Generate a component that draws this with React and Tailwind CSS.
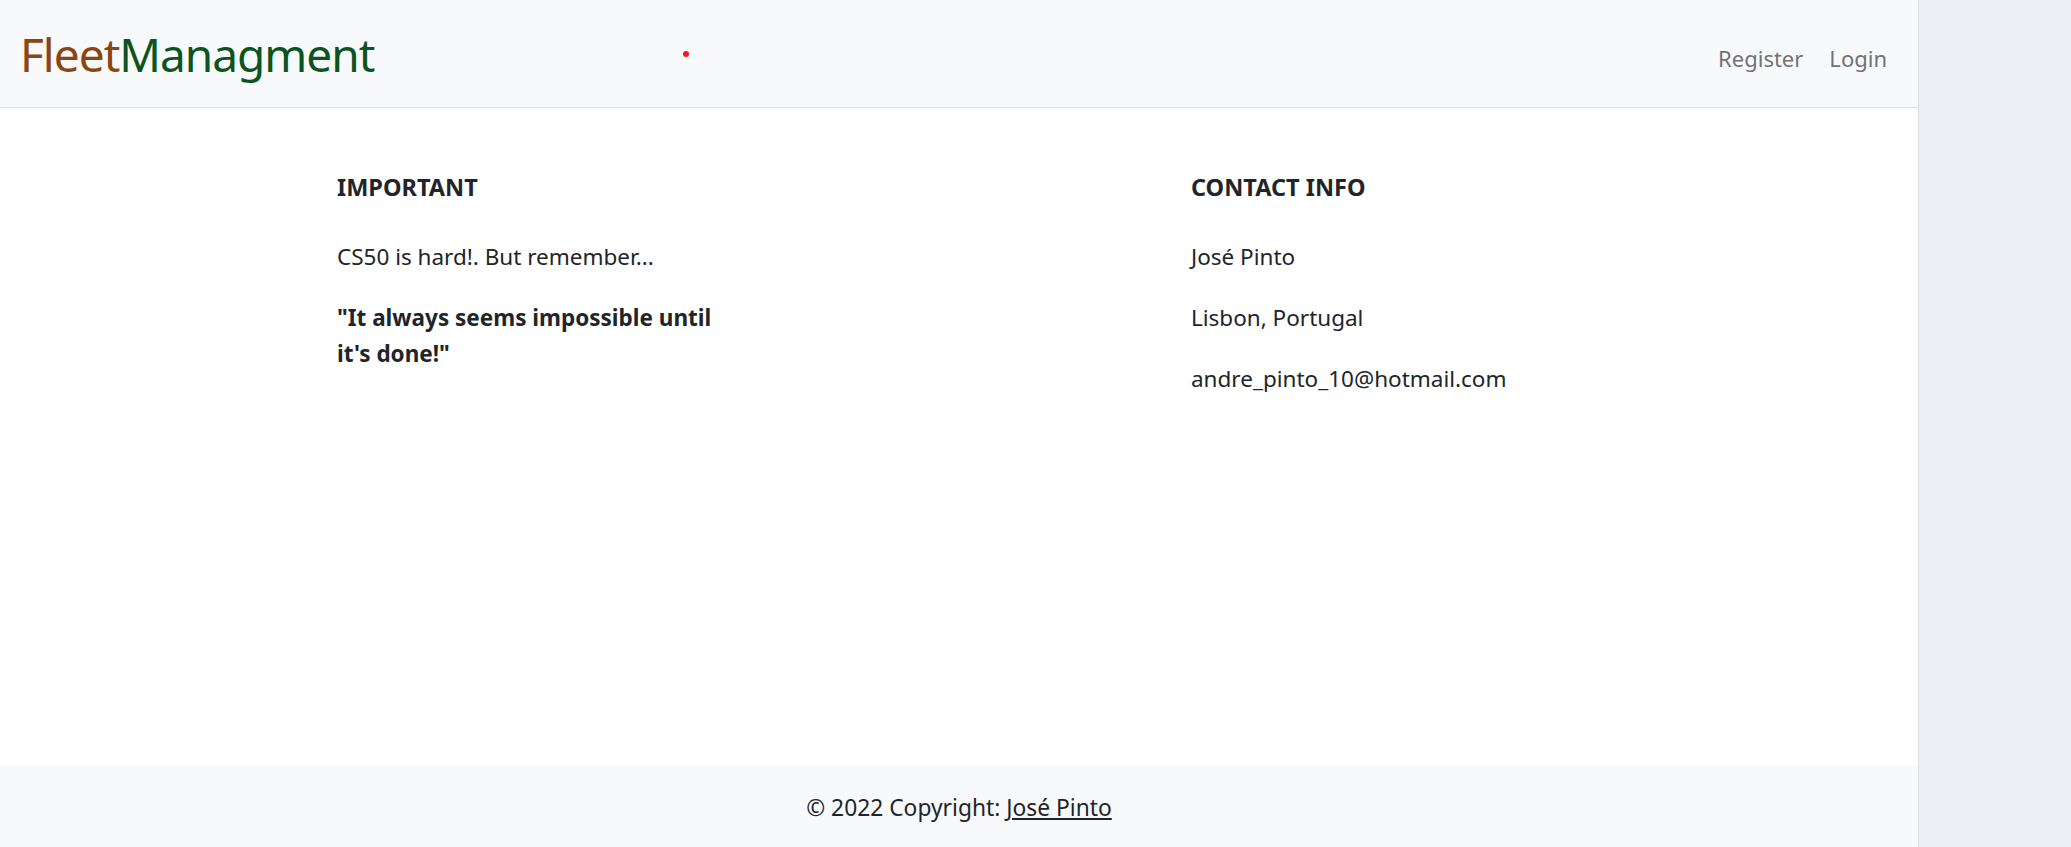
const font = { fontFamily: '"Noto Sans", "Open Sans", sans-serif' };

function Header() {
  return (
    <header className="h-[108px] bg-[#f8f9fa] border-b border-[#dee2e6] flex items-center justify-between pl-[20px] pr-[31px]">
      <div className="flex items-center">
        <a href="#" className="text-[46px] leading-none tracking-[-1px]">
          <span className="text-[#8b4513]">Fleet</span>
          <span className="text-[#0b5320]">Managment</span>
        </a>
        <span className="ml-[309px] w-[6px] h-[6px] rounded-full bg-[#ed1c24]" />
      </div>
      <nav className="flex items-center gap-[26px] pt-[10px] text-[22px] text-[#717375]">
        <a href="#">Register</a>
        <a href="#">Login</a>
      </nav>
    </header>
  );
}

export default function App() {
  return (
    <div className="flex w-full h-[847px] text-[#212529]" style={font}>
      <div className="w-[1918px] flex flex-col bg-white">
        <Header />

        {/* Info section */}
        <section className="flex-1 flex pt-[65px] text-[22.5px] leading-[36px]">
          <div className="ml-[337px] w-[391px]">
            <h6 className="text-[23.5px] font-bold uppercase leading-[29px] mb-[37px]">Important</h6>
            <p className="mb-[25px]">CS50 is hard!. But remember...</p>
            <p className="font-bold">"It always seems impossible until it's done!"</p>
          </div>
          <div className="ml-[463px]">
            <h6 className="text-[23.5px] font-bold uppercase leading-[29px] mb-[37px]">Contact info</h6>
            <p className="mb-[25px]">José Pinto</p>
            <p className="mb-[25px]">Lisbon, Portugal</p>
            <p>andre_pinto_10@hotmail.com</p>
          </div>
        </section>

        <footer className="h-[82px] bg-[#f8f9fa] flex items-center justify-center pt-[4px] text-[22.8px]">
          <span>
            © 2022 Copyright: <a href="#" className="underline">José Pinto</a>
          </span>
        </footer>
      </div>
      <div className="flex-1 bg-[#eceff4] border-l border-[#dde0e5]" />
    </div>
  );
}
